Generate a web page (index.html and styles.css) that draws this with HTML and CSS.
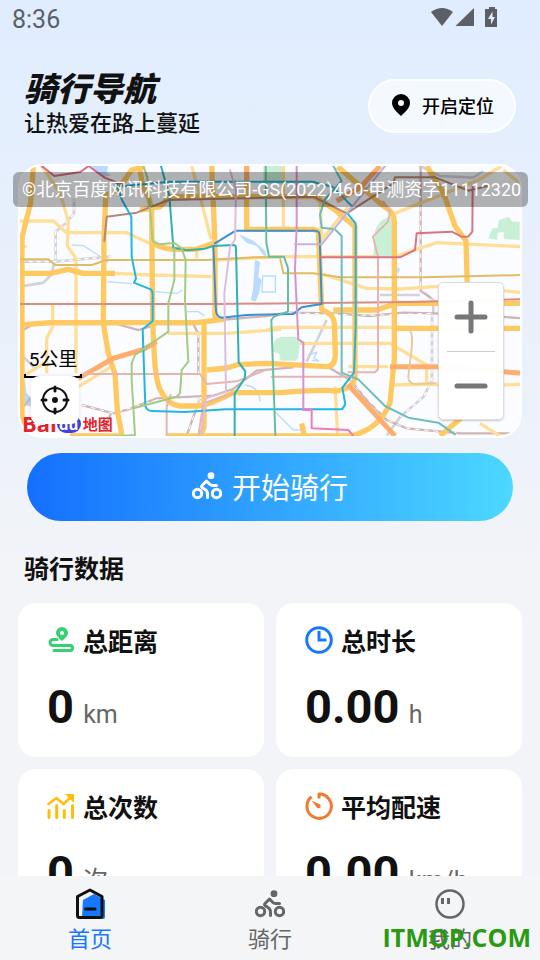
FILE: index.html
```
<!DOCTYPE html>
<html lang="zh-CN">
<head>
  <meta charset="UTF-8">
  <meta name="viewport" content="width=device-width, initial-scale=1.0">
  <title>骑行导航</title>
  <link rel="stylesheet" href="styles.css">
</head>
<body>

<!-- 公共图标 -->
<svg class="defs" width="0" height="0" aria-hidden="true">
  <symbol id="bike" viewBox="0 0 30 28">
    <g fill="none" stroke="currentColor" stroke-width="3" stroke-linecap="round" stroke-linejoin="round">
      <circle cx="5.500" cy="21.500" r="4.200"/>
      <circle cx="24.500" cy="21.500" r="4.200"/>
      <path d="M15.500 25.500v-3.500q0-3-2.500-4.500l-3-2q-1-1 0-2l4.500-4.500 3.500 3.500q1 1 2.500 1h4"/>
    </g>
    <circle cx="19" cy="3.700" r="3.400" fill="currentColor"/>
  </symbol>
</svg>

<div class="statusBar">
  <span>8:36</span>
  <svg width="68" height="22" viewBox="0 0 68 22" fill="currentColor" aria-hidden="true">
    <path d="M0 5Q11-3 22 5L11 19z"/>
    <path d="M43 1v18H24.500z"/>
    <path fill-rule="evenodd" d="M56 2h2V0h6v2h2v18H54V2zM61.500 4.500L57 12h3v5.500l4-7.500h-2.500z"/>
  </svg>
</div>

<main>
  <header>
    <div>
      <h1>骑行导航</h1>
      <p>让热爱在路上蔓延</p>
    </div>
    <button class="locateBtn">
      <svg width="18" height="22" viewBox="0 0 18 22" aria-hidden="true">
        <path fill-rule="evenodd" d="M9 0a9 9 0 0 1 9 9c0 5-5 9-9 13-4-4-9-8-9-13a9 9 0 0 1 9-9zM9 6a3 3 0 1 0 0 6 3 3 0 0 0 0-6z"/>
      </svg>
      开启定位
    </button>
  </header>

  <section class="map">
    <svg class="mapArt" viewBox="60 18 1500 810" preserveAspectRatio="xMidYMid slice" aria-hidden="true">
      <rect x="60" y="18" width="1500" height="810" fill="#fbfcff"/>

      <!-- 公园 -->
      <g fill="#c8f0d7">
        <path d="M790 18h56v55h-56z"/>
        <path d="M1175 170q-40 5-50 45l-5 75h60z"/>
        <path d="M822 545l20-14h50l8 20-6 45-8 6h-44l-4-20-20-8z"/>
        <path d="M1465 235l12-30h15l5-25 30-10 10 15h22v55l-48-3v-22l-18 4-2 20z"/>
        <path d="M830 535q-15 15 0 35l15-5v-30z"/>
      </g>

      <!-- 水系 -->
      <g fill="#b9dbff">
        <path d="M275 18h50l-5 20 14 8-20 4-24-14z"/>
        <path d="M765 300l15 5-5 45 10 10-8 40-10 25-15-5 7-30z"/>
        <path d="M715 222l45 20 35 30 5 18-10-5-20-27-30-10z"/>
        <path d="M60 650l15 15 5 35 20 20-10 20-30-10z"/>
        <path d="M1188 320l12 6-4 12-14-2z"/>
      </g>
      <g fill="none" stroke="#b9dbff" stroke-width="4">
        <path d="M215 255l35 2 35 22 40 28M320 365l75 6M462 395l70 5 15-10M560 455h35l18 12M735 675q45 5 45 50"/>
        <path d="M788 348h38v48h-40zM825 755l55 55h30M925 585l25-8-8 18 15 8-22-2"/>
      </g>

      <!-- 铁路 -->
      <g fill="none" stroke="#d2d2da" stroke-width="8">
        <path d="M222 115v45l-25 30-30 25v90M62 305h100l170-15M60 380l70-12 25-25 8-38M60 580l50 50"/>
        <path d="M1260 18l60 30 100 5 30-20M1296 460v200l-25 50-70 60-40 56M1275 400l25 20v40M980 480l-60 125M1140 405h120"/>
      </g>
      <g fill="none" stroke="#fff" stroke-width="4" stroke-dasharray="12 12">
        <path d="M222 115v45l-25 30-30 25v90M62 305h100l170-15M1296 460v200l-25 50-70 60M1262 180v220"/>
      </g>
      <g fill="none" stroke="#cfb5b5" stroke-width="7">
        <path d="M70 510l30-18h250l65 18 60-18h105l15 30v120M245 735l95 25 40-10 90-35 170-8 60-20 70-55 110-10M335 755l-25 60M600 715l-40 112M60 755l30-40"/>
        <path d="M660 480l140-12 60-10 150 2 100 8 100-10 90 2 200 10 160 12"/>
        <path d="M990 625l60 35 50 60 60 60 60 25 160 15h180M1262 18v375l30 20M1262 140v250"/>
      </g>
      <g fill="none" stroke="#fff" stroke-width="3" stroke-dasharray="14 14">
        <path d="M245 735l95 25 130-40 170-8 60-20 70-55M595 520v120M600 715l-40 112M860 458l250 8 190-6M1262 140v250M1050 660l110 120 60 25 160 15"/>
      </g>

      <!-- 次干道 -->
      <g fill="none" stroke="#ffdf98" stroke-width="10" stroke-linejoin="round">
        <path d="M60 183h100l40 35h180l75 35M125 18l55 80 25 85-3 75 26 37v345M158 435v65l-18 35v105M60 260h20"/>
        <path d="M345 340l110 5 180 5M590 275v20M503 520h180l160-12M235 680l100-60M650 300l190-10M60 655l80-50"/>
        <path d="M575 18l30 110 28 110M850 18v185M815 290h310M960 105l5 135 80-100M800 510l30-8h405M900 550h270l110 65v55"/>
        <path d="M960 340l140 45 100 2 150-10 210 20M1185 290l125-42 250 12M1185 160l250-100 70-42M1005 680l8 145"/>
        <path d="M1045 620h120M1180 675l130-3 20 20M1440 790l60 38M1510 675l60-2M1510 30l50 40"/>
      </g>

      <!-- 快速路 -->
      <g fill="none" stroke="#ffc961" stroke-width="16" stroke-linejoin="round">
        <path d="M100 18l-8 110-26 105v590M318 95l-6 135-2 260 15 90 20 62 7 110 14 75"/>
        <path d="M418 18l10 60q26 40 27 80l3 330 4 80q4 90 18 120 20 45 60 50h50q30 0 110-40h140q130-10 165-5 50-5 60-40V200l-60-50-60-40H510l-30 30-60 10"/>
        <path d="M458 250q35 18 72 18h60l55-20-10-230M645 240v235M60 495l90-7h440l80-10"/>
        <path d="M60 340h90l55-12 45 12h95M612 485v315l-10 28M740 18v190h200l15 6 10 236q35 10 38 40l3 90q0 40-25 40l-180-10-90 4-30 10-60 6"/>
        <path d="M345 100l50-70 40-10M500 828h550q90-20 120-100l13-130V185q0-30-30-45l-140-120"/>
        <path d="M1280 18l50 80 35 100 33 45 4 140M1183 505h377M1000 450h130l60-20h370M360 828H210M905 790l8 38M1320 828l70-60"/>
      </g>
      <g fill="none" stroke="#ffad6c" stroke-width="15">
        <path d="M235 655l105-60 90-27 40-23M1045 675l140 153M1170 620h140l260 20M740 18v45M1140 18l-60 65-70 40"/>
      </g>

      <!-- 地铁 -->
      <g fill="none" stroke-width="6" stroke-linejoin="round" stroke-linecap="round">
        <path stroke="#d96a83" d="M125 18l38 30 78-12 25-18 48 35 55 22"/>
        <path stroke="#b38775" d="M313 243l7-73 90-12 95-38 435-10 100 50 140-90 5-18h120l100 40 60-15"/>
        <path stroke="#e0bd63" d="M60 298h85l20 17h110l45-15h300l150-8h70l10 48h90l80 12h250l350-8"/>
        <path stroke="#dc8d80" d="M60 432h600l570-6 330-8"/>
        <path stroke="#e5b6ad" d="M250 642h350l20 30 90-8 90-35M815 650h230M1045 637h80l9-10V290l-15-60 45-45 6-30-20-30M700 700l-90 30-15 98M500 828V740l12-35"/>
        <path stroke="#22b5df" d="M350 70l16 50 28 50 1 120 13 65-6 13 50 20q7 5 6 20v75l-30 25 8 230q5 15 20 15l100 3 120-8h350l10-15-9-50 35-45 5-140V190l-25-30 15-20-60-60-60-15H510l-160 15"/>
        <path stroke="#2fb0b4" d="M483 18l25 90 12 155 40 8 55-5 25-8 60-3q8 0 8 12l8 340 20 27-2 22-30 45v127"/>
        <path stroke="#3d91d0" d="M645 250l62-38h238q14 0 14 15l6 205-60 10-25 20-140 3-75 8q-15-3-17-20l-8-195"/>
        <path stroke="#a2cc83" d="M430 18l12 35 8 90 8 100 20 10 45-4 22 16 12 35-2 120 10 185-20 25-5 70-10 10-130 35M523 265v95l-18 70v85l-100 70-10 25v50l10 165-140 10"/>
        <path stroke="#66bea0" d="M797 18l2 230 8 42h45l12 35v130l-42 15-8 10 12 348"/>
        <path stroke="#dfbddf" d="M690 30l18 60-3 150-15 20-10 85-7 55 5 295-60 20-15 110"/>
        <path stroke="#d493cd" d="M890 18v180l-5 130 10 210 15 10v200h25"/>
        <path stroke="#ee7bbb" d="M910 750h25v55l110 5 15 18"/>
        <path stroke="#70bdbc" d="M1000 18l25 45-50 55-15 45 5 40 40 5 20 20v410l50 20 80 80 70 35 90 15 50 35"/>
        <path stroke="#c5b2dc" d="M885 253h80l190-235"/>
        <path stroke="#dc7380" d="M960 292h240l45-22 5-50 105-5 30 15h20l12-15 1-140"/>
        <path stroke="#edc7a0" d="M1225 505q15 10 10 60l-10 85q0 20 20 22l60-2"/>
      </g>
    </svg>

    <p class="copyright">©北京百度网讯科技有限公司-GS(2022)460-甲测资字11112320</p>
    <div class="scale">5公里</div>
    <div class="mapLogo"><b>Bai</b><i>du</i><span>地图</span></div>
    <button class="centerBtn" aria-label="定位到当前位置">
      <svg width="30" height="30" viewBox="0 0 30 30" fill="none" stroke="#111" stroke-width="2" aria-hidden="true">
        <circle cx="15" cy="15" r="12"/>
        <circle cx="15" cy="15" r="3" fill="#111" stroke="none"/>
        <path stroke-width="3" stroke-linecap="round" d="M15 2v4M15 24v4M2 15h4M24 15h4"/>
      </svg>
    </button>
    <div class="zoomBox">
      <button aria-label="放大"><svg width="34" height="34" viewBox="0 0 34 34"><path d="M3 17h28M17 3v28"/></svg></button>
      <button aria-label="缩小"><svg width="34" height="34" viewBox="0 0 34 34"><path d="M3 17h28"/></svg></button>
    </div>
  </section>

  <button class="startBtn">
    <svg width="30" height="28" aria-hidden="true"><use href="#bike"/></svg>
    开始骑行
  </button>

  <h2>骑行数据</h2>

  <section class="cards">
    <div class="card">
      <h3>
        <svg width="28" height="28" viewBox="0 0 28 28" fill="none" stroke="#35d073" stroke-width="3" stroke-linecap="round" stroke-linejoin="round" aria-hidden="true">
          <path fill="#35d073" fill-rule="evenodd" stroke="none" d="M15 1a6 6 0 0 1 6 6c0 3-3 5-6 8-3-3-6-5-6-8a6 6 0 0 1 6-6zM15 5a2 2 0 1 0 0 4 2 2 0 0 0 0-4z"/>
          <path d="M10 13.500H6a3 3 0 0 0 0 6h17a2.500 2.500 0 0 1 0 5H7"/>
        </svg>
        总距离
      </h3>
      <p><strong>0</strong> km</p>
    </div>
    <div class="card">
      <h3>
        <svg width="28" height="28" viewBox="0 0 28 28" fill="none" stroke="#1677ff" stroke-width="3" aria-hidden="true">
          <circle cx="14" cy="14" r="12.300"/>
          <path d="M14 5v9h7.500"/>
        </svg>
        总时长
      </h3>
      <p><strong>0.00</strong> h</p>
    </div>
    <div class="card">
      <h3>
        <svg width="28" height="28" viewBox="0 0 28 28" fill="none" stroke="#ffbd0a" stroke-width="3" stroke-linecap="round" aria-hidden="true">
          <path d="M2 18.500V25.500M9.700 13.500v12M17.300 18.500v7M25.500 13.500v12"/>
          <path stroke-width="2.500" d="M1.500 12L9.500 6l7 6L24 5"/>
          <path fill="#ffbd0a" stroke="none" d="M18 2h9v9z"/>
        </svg>
        总次数
      </h3>
      <p><strong>0</strong> 次</p>
    </div>
    <div class="card">
      <h3>
        <svg width="28" height="28" viewBox="0 0 28 28" fill="none" stroke="#f27a2c" stroke-width="3" aria-hidden="true">
          <path stroke-linejoin="round" d="M14 6.500V2a12.200 12.200 0 1 1-7.500 2.700"/>
          <path fill="#f27a2c" stroke="none" d="M6.500 8.500l7.500 3.500a2.200 2.200 0 1 1-2.500 3z"/>
        </svg>
        平均配速
      </h3>
      <p><strong>0.00</strong> km/h</p>
    </div>
  </section>
</main>

<nav>
  <a class="active" href="#home">
    <svg width="30" height="32" viewBox="0 0 30 32" aria-hidden="true">
      <path fill="#1677ff" d="M8 12l11-6 11 6v17q0 2-2 2H9q-2 0-2-2z"/>
      <path fill="none" stroke="#111" stroke-width="3" stroke-linejoin="round" d="M2.500 8.500L15 2l12 6.500v19q0 2-2 2h-20.500q-2 0-2-2z"/>
      <path stroke="#111" stroke-width="3" stroke-linecap="round" d="M10.500 21h9.500"/>
    </svg>
    首页
  </a>
  <a href="#ride">
    <svg width="30" height="32" aria-hidden="true"><use href="#bike"/></svg>
    骑行
  </a>
  <a href="#mine">
    <svg width="30" height="32" viewBox="0 0 30 32" fill="none" stroke="#666" stroke-width="2.500" aria-hidden="true">
      <circle cx="15" cy="16" r="13.500"/>
      <path stroke-width="3" d="M7.500 10v6M13.500 10v6"/>
    </svg>
    我的
  </a>
  <span class="siteMark">ITMOP.COM</span>
</nav>

</body>
</html>
```
FILE: styles.css
```
* {
  box-sizing: border-box;
}
body {
  margin: 0;
  height: 100vh;
  display: flex;
  flex-direction: column;
  overflow: hidden;
  font-family: "Noto Sans CJK SC", sans-serif;
  color: #111;
  background: linear-gradient(#e0edff, #f3f4f7 64%);
}
h1, h2, h3, p {
  margin: 0;
}
button {
  font-family: inherit;
  border: none;
  padding: 0;
  cursor: pointer;
}
.defs {
  position: absolute;
}

/* 状态栏 */
.statusBar {
  flex: none;
  display: flex;
  justify-content: space-between;
  align-items: center;
  height: 38px;
  padding: 0 41px 0 12px;
  font-family: Roboto, sans-serif;
  font-size: 25px;
  color: #5c6066;
}
.statusBar svg {
  margin-bottom: 2px;
}

main {
  flex: 1;
  min-height: 0;
  overflow: hidden;
  padding: 30px 18px 0;
}
header {
  display: flex;
  justify-content: space-between;
  min-height: 76px;
  padding: 0 6px;
  margin-bottom: 20px;
}
h1 {
  font-size: 33px;
  line-height: 38px;
  font-weight: 900;
  font-style: italic;
}
header p {
  font-size: 22px;
  line-height: 30px;
  font-weight: 500;
}
.locateBtn {
  align-self: center;
  display: flex;
  align-items: center;
  gap: 12px;
  height: 54px;
  padding: 0 20px 2px 22px;
  border: 2px solid #fff;
  border-radius: 27px;
  background: #f4f8ff;
  font-size: 18px;
  font-weight: 500;
  color: #000;
}

/* 地图 */
.map {
  position: relative;
  height: 274px;
  border: 2px solid #fff;
  border-radius: 24px;
}
.mapArt {
  display: block;
  width: 100%;
  height: 100%;
  border-radius: 22px;
}
.copyright {
  position: absolute;
  top: 6px;
  left: -7px;
  right: -8px;
  padding-left: 9px;
  border-radius: 6px;
  background: rgba(0, 0, 0, 0.3);
  color: #fff;
  font-family: Roboto, "Noto Sans CJK SC", sans-serif;
  font-size: 18px;
  line-height: 35px;
  white-space: nowrap;
}
.scale {
  position: absolute;
  left: 4px;
  bottom: 58px;
  width: 58px;
  border: 2px solid #000;
  border-image: linear-gradient(transparent 88%, #000 88%) 2;
  font-family: Roboto, "Noto Sans CJK SC", sans-serif;
  font-size: 19px;
  line-height: 32px;
  text-align: center;
  color: #000;
}
.mapLogo {
  position: absolute;
  left: 2px;
  bottom: 0;
  display: flex;
  align-items: center;
  font-family: "Open Sans", sans-serif;
  font-size: 22px;
  line-height: 22px;
  color: #e2262c;
}
.mapLogo b {
  padding-bottom: 2px;
}
.mapLogo i {
  width: 24px;
  border-radius: 10px;
  background: #4541dc;
  color: #fff;
  font-size: 15px;
  font-style: normal;
  font-weight: bold;
  line-height: 18px;
  text-align: center;
}
.mapLogo span {
  margin-left: 2px;
  font-family: "Noto Sans CJK SC", sans-serif;
  font-size: 15px;
  font-weight: 700;
}
.centerBtn {
  position: absolute;
  left: 11px;
  bottom: 12px;
  display: grid;
  place-items: center;
  width: 48px;
  height: 48px;
  border-radius: 8px;
  background: #fff;
  box-shadow: 0 0 4px rgba(0, 0, 0, 0.1);
}
.zoomBox {
  position: absolute;
  right: 16px;
  bottom: 16px;
  width: 66px;
  padding: 0 8px;
  border: 1px solid #ddd;
  border-radius: 5px;
  background: rgba(255, 255, 255, 0.97);
  box-shadow: 0 1px 2px rgba(0, 0, 0, 0.2);
}
.zoomBox button {
  display: grid;
  place-items: center;
  width: 100%;
  height: 68px;
  background: none;
}
.zoomBox button + button {
  border-top: 1px solid #ccc;
}
.zoomBox path {
  stroke: #777;
  stroke-width: 5;
  stroke-linecap: round;
}

.startBtn {
  display: flex;
  justify-content: center;
  align-items: center;
  gap: 10px;
  width: calc(100% - 18px);
  height: 68px;
  margin: 15px 9px 26px;
  padding-bottom: 3px;
  border-radius: 34px;
  background: linear-gradient(90deg, #146fff, #4cd8ff);
  color: #fff;
  font-size: 29px;
}

/* 骑行数据 */
h2 {
  padding-left: 6px;
  margin-bottom: 16px;
  font-size: 25px;
  line-height: 40px;
  font-weight: 700;
}
.cards {
  display: grid;
  grid-template-columns: 1fr 1fr;
  gap: 12px;
}
.card {
  height: 154px;
  padding: 17px 29px;
  border-radius: 18px;
  background: #fff;
}
.card h3 {
  display: flex;
  align-items: center;
  gap: 8px;
  font-size: 25px;
  line-height: 40px;
  font-weight: 700;
}
.card p {
  margin-top: 14px;
  font-family: Roboto, "Noto Sans CJK SC", sans-serif;
  font-size: 25px;
  line-height: 66px;
  color: #666;
}
.card strong {
  margin-right: 3px;
  font-size: 47px;
  color: #111;
}

/* 底部导航 */
nav {
  position: relative;
  flex: none;
  display: flex;
  height: 84px;
  padding-top: 12px;
  background: #f3f5f7;
}
nav a {
  flex: 1;
  display: flex;
  flex-direction: column;
  align-items: center;
  font-size: 22px;
  line-height: 34px;
  color: #666;
  text-decoration: none;
}
nav a.active {
  color: #1677ff;
}
.siteMark {
  position: absolute;
  right: 9px;
  bottom: 6px;
  font-family: "Open Sans", sans-serif;
  font-size: 25px;
  line-height: 34px;
  font-weight: bold;
  color: #2a9a12;
}
```
